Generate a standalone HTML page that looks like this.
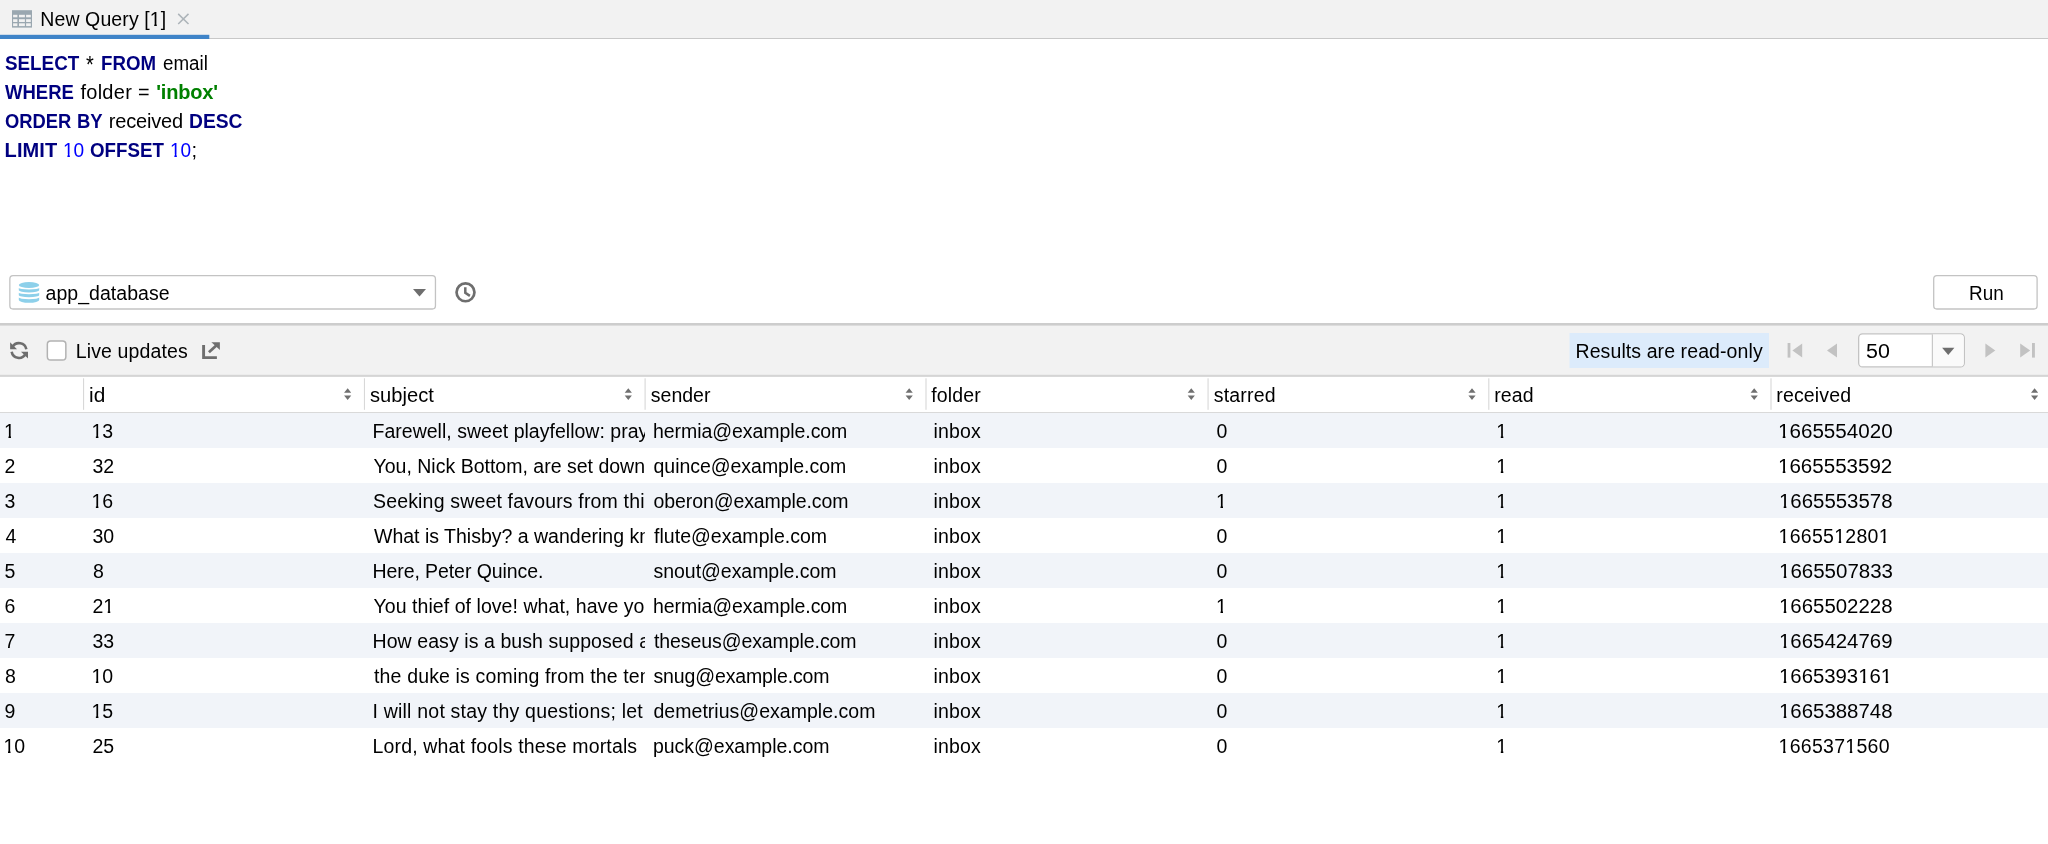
<!DOCTYPE html>
<html><head><meta charset="utf-8"><title>New Query [1]</title>
<style>
html,body{margin:0;padding:0}
body{width:2048px;height:844px;position:relative;overflow:hidden;background:#fff;color:#000;font-family:'Liberation Sans',sans-serif}
.t{position:absolute;line-height:1;white-space:pre;transform-origin:0 0}
.clip{position:absolute;overflow:hidden}
.o{display:inline-block;clip-path:polygon(0 0,1em 0,1em .7em,.36em .7em,.36em 1em,.23em 1em,.23em .7em,0 .7em)}
#tx{position:absolute;left:0;top:0;width:2048px;height:844px;will-change:transform}
#g{position:absolute;left:0;top:0}
</style></head><body>
<svg id="g" width="2048" height="844" viewBox="0 0 2048 844">
<!-- tab bar -->
<rect x="0" y="0" width="2048" height="38" fill="#f2f2f2"/>
<rect x="0" y="38" width="2048" height="1" fill="#c8c8c8"/>
<rect x="0" y="34.8" width="209.3" height="4.2" fill="#3f84c8"/>
<g><rect x="12" y="10.2" width="20" height="17.4" fill="#9aa7b0"/>
<g fill="#f1f1f1"><rect x="13.1" y="14.8" width="4.3" height="2.5"/><rect x="19" y="14.8" width="5.9" height="2.5"/><rect x="26.1" y="14.8" width="4.7" height="2.5"/>
<rect x="13.1" y="19.2" width="4.3" height="2.8"/><rect x="19" y="19.2" width="5.9" height="2.8"/><rect x="26.1" y="19.2" width="4.7" height="2.8"/>
<rect x="13.1" y="23.3" width="4.3" height="2.8"/><rect x="19" y="23.3" width="5.9" height="2.8"/><rect x="26.1" y="23.3" width="4.7" height="2.8"/></g></g>
<path d="M178.2 13.9L188.5 24M188.5 13.9L178.2 24" stroke="#adb4b9" stroke-width="1.5" fill="none"/>

<!-- db select -->
<rect x="9.85" y="275.7" width="425.6" height="33.3" rx="3.2" fill="#fff" stroke="#c3c3c3" stroke-width="1.3"/>
<g fill="#8dd0ea">
<ellipse cx="29" cy="285" rx="10.2" ry="2.95"/>
<path d="M18.8 287.9 A10.2 1.50 0 0 0 39.2 287.9 V290.3 A10.2 2.20 0 0 1 18.8 290.3Z"/>
<path d="M18.8 292.8 A10.2 1.50 0 0 0 39.2 292.8 V295.2 A10.2 2.00 0 0 1 18.8 295.2Z"/>
<path d="M18.8 297.6 A10.2 1.60 0 0 0 39.2 297.6 V299.9 A10.2 2.90 0 0 1 18.8 299.9Z"/>
</g>
<path d="M413 289H426L419.5 296.6Z" fill="#6e6e6e"/>
<circle cx="465.5" cy="292.3" r="8.95" fill="none" stroke="#6e6e6e" stroke-width="2.7"/><path d="M465.3 287.3V292.9L469.9 295.9" fill="none" stroke="#6e6e6e" stroke-width="2.5"/>
<!-- run -->
<rect x="1933.7" y="275.7" width="103.4" height="33.3" rx="3.2" fill="#fff" stroke="#c3c3c3" stroke-width="1.3"/>

<!-- splitter + toolbar -->
<rect x="0" y="325" width="2048" height="51" fill="#f2f2f2"/>
<rect x="0" y="323" width="2048" height="2.6" fill="#cdcdcd"/>
<rect x="0" y="374.8" width="2048" height="2.1" fill="#d5d5d5"/>
<!-- refresh -->
<g fill="none" stroke="#6e6e6e" stroke-width="2.6"><path d="M12.55 346.9 A7.45 7.45 0 0 1 26.34 349.3"/><path d="M25.45 354.2 A7.45 7.45 0 0 1 11.66 351.8"/></g>
<path d="M10.1 342.3V349.2H17Z" fill="#6e6e6e"/><path d="M28 358.6V351.7H21Z" fill="#6e6e6e"/>
<!-- checkbox -->
<rect x="47.35" y="340.9" width="18.5" height="19.2" rx="3.3" fill="#fff" stroke="#b2b2b2" stroke-width="1.5"/>
<!-- popout -->
<path d="M203.6 344.9V357.6H216.9" fill="none" stroke="#6e6e6e" stroke-width="2.9"/><path d="M208.9 352.2L216.6 345.2" stroke="#6e6e6e" stroke-width="2.8" fill="none"/><path d="M211.4 342.2H219.9V350Z" fill="#6e6e6e"/>
<!-- read-only badge -->
<rect x="1569.5" y="333" width="199.5" height="35" fill="#dcebfb"/>
<!-- pager -->
<g fill="#c2c2c2">
<rect x="1787.6" y="343" width="2.8" height="14.6"/><path d="M1802.2 343.6V357.5L1792.4 350.55Z"/>
<path d="M1837 343.6V357.5L1827 350.55Z"/>
<path d="M1985.4 343.6V357.5L1995.3 350.55Z"/>
<path d="M2020.2 343.6V357.5L2030.2 350.55Z"/><rect x="2032" y="343" width="2.9" height="14.6"/>
</g>
<rect x="1858.65" y="333.85" width="105.7" height="33.1" rx="4" fill="#fff" stroke="#c3c3c3" stroke-width="1.3"/>
<path d="M1932.9 334.5H1960.35a3.35 3.35 0 0 1 3.35 3.35V362.95a3.35 3.35 0 0 1 -3.35 3.35H1932.9Z" fill="#fafafa"/>
<rect x="1931.8" y="334.4" width="1.1" height="32" fill="#c3c3c3"/>
<path d="M1942.1 347.7H1954.4L1948.25 355.1Z" fill="#6e6e6e"/>
<!-- header -->
<rect x="0" y="412" width="2048" height="1.1" fill="#d9d9d9"/>
<rect x="0" y="413.0" width="2048" height="35" fill="#f1f4f9"/>
<rect x="0" y="483.0" width="2048" height="35" fill="#f1f4f9"/>
<rect x="0" y="553.0" width="2048" height="35" fill="#f1f4f9"/>
<rect x="0" y="623.0" width="2048" height="35" fill="#f1f4f9"/>
<rect x="0" y="693.0" width="2048" height="35" fill="#f1f4f9"/>
<rect x="83.00" y="378.3" width="1.1" height="31.5" fill="#d8d8d8"/>
<rect x="363.91" y="378.3" width="1.1" height="31.5" fill="#d8d8d8"/>
<rect x="644.55" y="378.3" width="1.1" height="31.5" fill="#d8d8d8"/>
<rect x="925.45" y="378.3" width="1.1" height="31.5" fill="#d8d8d8"/>
<rect x="1207.52" y="378.3" width="1.1" height="31.5" fill="#d8d8d8"/>
<rect x="1488.25" y="378.3" width="1.1" height="31.5" fill="#d8d8d8"/>
<rect x="1770.45" y="378.3" width="1.1" height="31.5" fill="#d8d8d8"/>
<path d="M344.06 392.8L347.66 388.3L351.26 392.8Z M344.06 395.6L347.66 400L351.26 395.6Z M624.70 392.8L628.30 388.3L631.90 392.8Z M624.70 395.6L628.30 400L631.90 395.6Z M905.60 392.8L909.20 388.3L912.80 392.8Z M905.60 395.6L909.20 400L912.80 395.6Z M1187.67 392.8L1191.27 388.3L1194.87 392.8Z M1187.67 395.6L1191.27 400L1194.87 395.6Z M1468.40 392.8L1472.00 388.3L1475.60 392.8Z M1468.40 395.6L1472.00 400L1475.60 395.6Z M1750.60 392.8L1754.20 388.3L1757.80 392.8Z M1750.60 395.6L1754.20 400L1757.80 395.6Z M2031.00 392.8L2034.60 388.3L2038.20 392.8Z M2031.00 395.6L2034.60 400L2038.20 395.6Z" fill="#707070"/>
</svg>
<div id="tx">
<span class="t" style="left:40.30px;top:10px;font-size:19.5px;letter-spacing:0.100px;">New Query [<span class="o">1</span>]</span>
<span class="t" style="left:4.53px;top:53px;font-size:20px;transform:scaleX(0.9414);font-weight:700;color:#000080;">SELECT</span>
<span class="t" style="left:86.18px;top:53px;font-size:24px;transform:scaleX(0.8353);">*</span>
<span class="t" style="left:100.87px;top:53px;font-size:20px;transform:scaleX(0.9333);font-weight:700;color:#000080;">FROM</span>
<span class="t" style="left:163.13px;top:53px;font-size:20px;transform:scaleX(0.9398);">email</span>
<span class="t" style="left:5.10px;top:82px;font-size:20px;transform:scaleX(0.9257);font-weight:700;color:#000080;">WHERE</span>
<span class="t" style="left:80.40px;top:82px;font-size:20px;letter-spacing:0.280px;">folder</span>
<span class="t" style="left:138.21px;top:82px;font-size:20px;transform:scaleX(0.9900);">=</span>
<span class="t" style="left:156.20px;top:82px;font-size:20px;letter-spacing:-0.167px;font-weight:700;color:#008000;">'inbox'</span>
<span class="t" style="left:4.54px;top:111px;font-size:20px;transform:scaleX(0.9175);font-weight:700;color:#000080;">ORDER</span>
<span class="t" style="left:77.08px;top:111px;font-size:20px;transform:scaleX(0.9245);font-weight:700;color:#000080;">BY</span>
<span class="t" style="left:108.75px;top:111px;font-size:20px;letter-spacing:-0.179px;">received</span>
<span class="t" style="left:189.04px;top:111px;font-size:20px;transform:scaleX(0.9630);font-weight:700;color:#000080;">DESC</span>
<span class="t" style="left:4.60px;top:140px;font-size:20px;letter-spacing:0.100px;font-weight:700;color:#000080;">LIMIT</span>
<span class="t" style="left:62.79px;top:140px;font-size:20px;transform:scaleX(0.9550);color:#0000ff;"><span class="o">1</span>0</span>
<span class="t" style="left:90.43px;top:140px;font-size:20px;transform:scaleX(0.9363);font-weight:700;color:#000080;">OFFSET</span>
<span class="t" style="left:170.40px;top:140px;font-size:20px;transform:scaleX(0.9500);color:#0000ff;"><span class="o">1</span>0</span>
<span class="t" style="left:191.40px;top:140px;font-size:20px;">;</span>
<span class="t" style="left:45.50px;top:284px;font-size:19.5px;letter-spacing:0.045px;">app_database</span>
<span class="t" style="left:1969.04px;top:284px;font-size:19.5px;transform:scaleX(0.9701);">Run</span>
<span class="t" style="left:75.70px;top:342px;font-size:19.5px;letter-spacing:0.145px;">Live updates</span>
<span class="t" style="left:1575.50px;top:342px;font-size:19.5px;letter-spacing:0.090px;">Results are read-only</span>
<span class="t" style="left:1865.90px;top:342px;font-size:19.5px;transform:scaleX(1.1000);">50</span>
<span class="t" style="left:88.63px;top:386px;font-size:19.5px;transform:scaleX(1.0692);">id</span>
<span class="t" style="left:369.98px;top:386px;font-size:19.5px;transform:scaleX(1.0325);">subject</span>
<span class="t" style="left:650.80px;top:386px;font-size:19.5px;">sender</span>
<span class="t" style="left:931.30px;top:386px;font-size:19.5px;letter-spacing:0.140px;">folder</span>
<span class="t" style="left:1213.70px;top:386px;font-size:19.5px;letter-spacing:0.200px;">starred</span>
<span class="t" style="left:1494.20px;top:386px;font-size:19.5px;letter-spacing:0.133px;">read</span>
<span class="t" style="left:1776.30px;top:386px;font-size:19.5px;letter-spacing:0.157px;">received</span>
<span class="t" style="left:4.00px;top:422px;font-size:19.5px;"><span class="o">1</span></span>
<span class="t" style="left:91.40px;top:422px;font-size:19.5px;"><span class="o">1</span>3</span>
<div class="clip" style="left:370px;width:274.5px;top:418px;height:29.5px"><span class="t" style="left:2.50px;top:4px;font-size:19.5px;letter-spacing:0.017px;">Farewell, sweet playfellow: pray thou for us;</span></div>
<span class="t" style="left:653.00px;top:422px;font-size:19.5px;letter-spacing:-0.059px;">hermia@example.com</span>
<span class="t" style="left:933.40px;top:422px;font-size:19.5px;letter-spacing:0.175px;">inbox</span>
<span class="t" style="left:1216.50px;top:422px;font-size:19.5px;">0</span>
<span class="t" style="left:1496.30px;top:422px;font-size:19.5px;"><span class="o">1</span></span>
<span class="t" style="left:1778.49px;top:422px;font-size:19.5px;transform:scaleX(1.0566);"><span class="o">1</span>665554020</span>
<span class="t" style="left:4.50px;top:457px;font-size:19.5px;">2</span>
<span class="t" style="left:92.40px;top:457px;font-size:19.5px;">32</span>
<div class="clip" style="left:370px;width:274.5px;top:453px;height:29.5px"><span class="t" style="left:3.50px;top:4px;font-size:19.5px;letter-spacing:0.007px;">You, Nick Bottom, are set down for Pyramus.</span></div>
<span class="t" style="left:653.50px;top:457px;font-size:19.5px;letter-spacing:-0.029px;">quince@example.com</span>
<span class="t" style="left:933.40px;top:457px;font-size:19.5px;letter-spacing:0.175px;">inbox</span>
<span class="t" style="left:1216.50px;top:457px;font-size:19.5px;">0</span>
<span class="t" style="left:1496.30px;top:457px;font-size:19.5px;"><span class="o">1</span></span>
<span class="t" style="left:1778.49px;top:457px;font-size:19.5px;transform:scaleX(1.0538);"><span class="o">1</span>665553592</span>
<span class="t" style="left:4.50px;top:492px;font-size:19.5px;">3</span>
<span class="t" style="left:91.40px;top:492px;font-size:19.5px;"><span class="o">1</span>6</span>
<div class="clip" style="left:370px;width:274.5px;top:488px;height:29.5px"><span class="t" style="left:3.00px;top:4px;font-size:19.5px;letter-spacing:0.169px;">Seeking sweet favours from this hateful fool,</span></div>
<span class="t" style="left:653.50px;top:492px;font-size:19.5px;letter-spacing:-0.088px;">oberon@example.com</span>
<span class="t" style="left:933.40px;top:492px;font-size:19.5px;letter-spacing:0.175px;">inbox</span>
<span class="t" style="left:1216.00px;top:492px;font-size:19.5px;"><span class="o">1</span></span>
<span class="t" style="left:1496.30px;top:492px;font-size:19.5px;"><span class="o">1</span></span>
<span class="t" style="left:1778.51px;top:492px;font-size:19.5px;transform:scaleX(1.0462);"><span class="o">1</span>665553578</span>
<span class="t" style="left:5.50px;top:527px;font-size:19.5px;">4</span>
<span class="t" style="left:92.40px;top:527px;font-size:19.5px;">30</span>
<div class="clip" style="left:370px;width:274.5px;top:523px;height:29.5px"><span class="t" style="left:4.00px;top:4px;font-size:19.5px;">What is Thisby? a wandering knight?</span></div>
<span class="t" style="left:654.00px;top:527px;font-size:19.5px;letter-spacing:0.031px;">flute@example.com</span>
<span class="t" style="left:933.40px;top:527px;font-size:19.5px;letter-spacing:0.175px;">inbox</span>
<span class="t" style="left:1216.50px;top:527px;font-size:19.5px;">0</span>
<span class="t" style="left:1496.30px;top:527px;font-size:19.5px;"><span class="o">1</span></span>
<span class="t" style="left:1778.60px;top:527px;font-size:19.5px;letter-spacing:0.267px;"><span class="o">1</span>6655<span class="o">1</span>280<span class="o">1</span></span>
<span class="t" style="left:4.50px;top:562px;font-size:19.5px;">5</span>
<span class="t" style="left:92.90px;top:562px;font-size:19.5px;">8</span>
<div class="clip" style="left:370px;width:274.5px;top:558px;height:29.5px"><span class="t" style="left:2.50px;top:4px;font-size:19.5px;letter-spacing:-0.083px;">Here, Peter Quince.</span></div>
<span class="t" style="left:653.50px;top:562px;font-size:19.5px;letter-spacing:-0.031px;">snout@example.com</span>
<span class="t" style="left:933.40px;top:562px;font-size:19.5px;letter-spacing:0.175px;">inbox</span>
<span class="t" style="left:1216.50px;top:562px;font-size:19.5px;">0</span>
<span class="t" style="left:1496.30px;top:562px;font-size:19.5px;"><span class="o">1</span></span>
<span class="t" style="left:1778.50px;top:562px;font-size:19.5px;transform:scaleX(1.0509);"><span class="o">1</span>665507833</span>
<span class="t" style="left:4.50px;top:597px;font-size:19.5px;">6</span>
<span class="t" style="left:92.40px;top:597px;font-size:19.5px;">2<span class="o">1</span></span>
<div class="clip" style="left:370px;width:274.5px;top:593px;height:29.5px"><span class="t" style="left:3.50px;top:4px;font-size:19.5px;letter-spacing:0.056px;">You thief of love! what, have you come by night</span></div>
<span class="t" style="left:653.00px;top:597px;font-size:19.5px;letter-spacing:-0.059px;">hermia@example.com</span>
<span class="t" style="left:933.40px;top:597px;font-size:19.5px;letter-spacing:0.175px;">inbox</span>
<span class="t" style="left:1216.00px;top:597px;font-size:19.5px;"><span class="o">1</span></span>
<span class="t" style="left:1496.30px;top:597px;font-size:19.5px;"><span class="o">1</span></span>
<span class="t" style="left:1778.51px;top:597px;font-size:19.5px;transform:scaleX(1.0462);"><span class="o">1</span>665502228</span>
<span class="t" style="left:4.50px;top:632px;font-size:19.5px;">7</span>
<span class="t" style="left:92.40px;top:632px;font-size:19.5px;">33</span>
<div class="clip" style="left:370px;width:274.5px;top:628px;height:29.5px"><span class="t" style="left:2.50px;top:4px;font-size:19.5px;letter-spacing:0.077px;">How easy is a bush supposed a bear!</span></div>
<span class="t" style="left:654.00px;top:632px;font-size:19.5px;letter-spacing:-0.083px;">theseus@example.com</span>
<span class="t" style="left:933.40px;top:632px;font-size:19.5px;letter-spacing:0.175px;">inbox</span>
<span class="t" style="left:1216.50px;top:632px;font-size:19.5px;">0</span>
<span class="t" style="left:1496.30px;top:632px;font-size:19.5px;"><span class="o">1</span></span>
<span class="t" style="left:1778.51px;top:632px;font-size:19.5px;transform:scaleX(1.0462);"><span class="o">1</span>665424769</span>
<span class="t" style="left:5.00px;top:667px;font-size:19.5px;">8</span>
<span class="t" style="left:91.40px;top:667px;font-size:19.5px;"><span class="o">1</span>0</span>
<div class="clip" style="left:370px;width:274.5px;top:663px;height:29.5px"><span class="t" style="left:4.00px;top:4px;font-size:19.5px;letter-spacing:0.155px;">the duke is coming from the temple</span></div>
<span class="t" style="left:653.50px;top:667px;font-size:19.5px;letter-spacing:-0.133px;">snug@example.com</span>
<span class="t" style="left:933.40px;top:667px;font-size:19.5px;letter-spacing:0.175px;">inbox</span>
<span class="t" style="left:1216.50px;top:667px;font-size:19.5px;">0</span>
<span class="t" style="left:1496.30px;top:667px;font-size:19.5px;"><span class="o">1</span></span>
<span class="t" style="left:1778.51px;top:667px;font-size:19.5px;transform:scaleX(1.0427);"><span class="o">1</span>665393<span class="o">1</span>6<span class="o">1</span></span>
<span class="t" style="left:4.50px;top:702px;font-size:19.5px;">9</span>
<span class="t" style="left:91.40px;top:702px;font-size:19.5px;"><span class="o">1</span>5</span>
<div class="clip" style="left:370px;width:274.5px;top:698px;height:29.5px"><span class="t" style="left:2.50px;top:4px;font-size:19.5px;letter-spacing:0.206px;">I will not stay thy questions; let me go:</span></div>
<span class="t" style="left:653.50px;top:702px;font-size:19.5px;letter-spacing:0.025px;">demetrius@example.com</span>
<span class="t" style="left:933.40px;top:702px;font-size:19.5px;letter-spacing:0.175px;">inbox</span>
<span class="t" style="left:1216.50px;top:702px;font-size:19.5px;">0</span>
<span class="t" style="left:1496.30px;top:702px;font-size:19.5px;"><span class="o">1</span></span>
<span class="t" style="left:1778.51px;top:702px;font-size:19.5px;transform:scaleX(1.0462);"><span class="o">1</span>665388748</span>
<span class="t" style="left:3.50px;top:737px;font-size:19.5px;"><span class="o">1</span>0</span>
<span class="t" style="left:92.40px;top:737px;font-size:19.5px;">25</span>
<div class="clip" style="left:370px;width:274.5px;top:733px;height:29.5px"><span class="t" style="left:2.50px;top:4px;font-size:19.5px;letter-spacing:0.155px;">Lord, what fools these mortals</span></div>
<span class="t" style="left:653.00px;top:737px;font-size:19.5px;letter-spacing:-0.033px;">puck@example.com</span>
<span class="t" style="left:933.40px;top:737px;font-size:19.5px;letter-spacing:0.175px;">inbox</span>
<span class="t" style="left:1216.50px;top:737px;font-size:19.5px;">0</span>
<span class="t" style="left:1496.30px;top:737px;font-size:19.5px;"><span class="o">1</span></span>
<span class="t" style="left:1778.60px;top:737px;font-size:19.5px;letter-spacing:0.267px;"><span class="o">1</span>66537<span class="o">1</span>560</span>
</div>
</body></html>
